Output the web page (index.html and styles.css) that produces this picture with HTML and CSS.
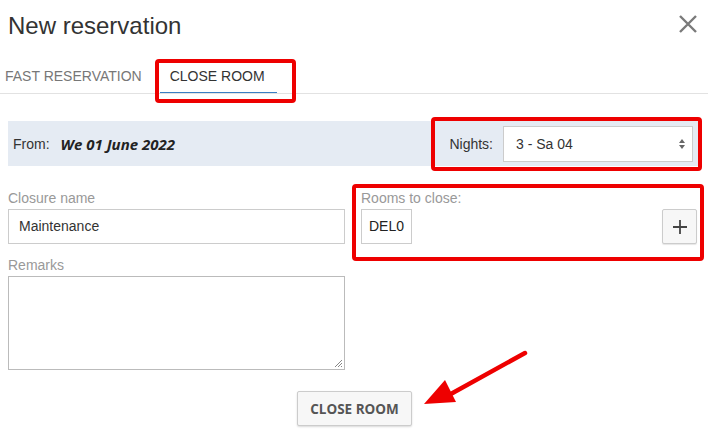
FILE: index.html
```html
<!DOCTYPE html>
<html lang="en">
<head>
    <meta charset="UTF-8">
    <title>New reservation</title>
    <link rel="stylesheet" href="styles.css">
</head>
<body>
    <div class="modal">
        <div class="modal-header">
            <h1>New reservation</h1>
            <button class="close-x" aria-label="Close">
                <svg width="20" height="20" viewBox="0 0 20 20"><path d="M2 2L18 18M18 2L2 18" stroke="#7a7a7a" stroke-width="2.4" fill="none"/></svg>
            </button>
        </div>

        <div class="tabs">
            <span class="tab">FAST RESERVATION</span>
            <span class="tab active">CLOSE ROOM</span>
        </div>

        <div class="from-bar">
            <span class="from-label">From:</span>
            <span class="from-date">We 01 June 2022</span>
            <span class="nights-label">Nights:</span>
            <div class="select">
                <span>3 - Sa 04</span>
                <svg width="8" height="12" viewBox="0 0 8 12"><path d="M4 1L7 5H1Z M4 11L7 7H1Z" fill="#666"/></svg>
            </div>
        </div>

        <div class="form-grid">
            <div class="col">
                <label>Closure name</label>
                <div class="input">Maintenance</div>
                <label class="remarks-label">Remarks</label>
                <div class="textarea">
                    <svg class="grip" width="9" height="9" viewBox="0 0 9 9"><path d="M8 1L1 8M8 4L4 8M8 7L7 8" stroke="#888" stroke-width="1"/></svg>
                </div>
            </div>
            <div class="col">
                <label>Rooms to close:</label>
                <div class="rooms-row">
                    <span class="room-chip">DEL0</span>
                    <button class="add-btn">
                        <svg width="16" height="16" viewBox="0 0 16 16"><path d="M8 1V15M1 8H15" stroke="#444" stroke-width="1.8"/></svg>
                    </button>
                </div>
            </div>
        </div>

        <div class="actions">
            <button class="submit-btn">CLOSE ROOM</button>
        </div>

        <!-- annotation marks -->
        <div class="mark mark-tab"></div>
        <div class="mark mark-nights"></div>
        <div class="mark mark-rooms"></div>
        <svg class="arrow" width="120" height="70" viewBox="0 0 120 70">
            <path d="M104 5L28 47" stroke="#ee0000" stroke-width="4.5" stroke-linecap="round"/>
            <path d="M3 56L24 32L35 54Z" fill="#ee0000"/>
        </svg>
    </div>
</body>
</html>
```

FILE: styles.css
```css
body {
    margin: 0;
    background: #fff;
    font-family: "Liberation Sans", Arial, sans-serif;
    color: #333;
}

.modal {
    position: relative;
    width: 708px;
    height: 442px;
    overflow: hidden;
}

.modal-header {
    display: flex;
    justify-content: space-between;
    align-items: flex-start;
    padding: 12px 10px 0 8px;
    height: 38px;
}

.modal-header h1 {
    margin: 0;
    font-size: 24px;
    font-weight: normal;
    line-height: 28px;
    color: #333;
}

.close-x {
    border: none;
    background: none;
    padding: 0;
    margin-top: 2px;
    width: 20px;
    height: 20px;
}

.tabs {
    display: flex;
    padding-left: 5px;
    padding-top: 18px;
    border-bottom: 1px solid #e2e2e2;
}

.tab {
    font-size: 14px;
    line-height: 16px;
    color: #777;
    padding-bottom: 9px;
}

.tab.active {
    color: #333;
    margin-left: 18px;
    padding: 0 12px 8px 10px;
    border-bottom: 1px solid #3a7fc4;
}

.from-bar {
    display: flex;
    align-items: center;
    margin: 27px 8px 0 8px;
    height: 45px;
    background: #e5ebf3;
    padding: 0 7px 0 5px;
    font-size: 14px;
}

.from-label {
    color: #333;
}

.from-date {
    margin-left: 11px;
    font-family: "Open Sans", sans-serif;
    font-weight: bold;
    font-style: italic;
    font-size: 15px;
    color: #222;
}

.nights-label {
    margin-left: auto;
    margin-right: 10px;
}

.select {
    display: flex;
    align-items: center;
    justify-content: space-between;
    box-sizing: border-box;
    width: 190px;
    height: 36px;
    background: #fff;
    border: 1px solid #ccc;
    padding: 0 6px 0 12px;
    font-size: 14px;
}

.form-grid {
    display: grid;
    grid-template-columns: 337px 336px;
    column-gap: 16px;
    padding-left: 8px;
    margin-top: 24px;
}

.col label {
    display: block;
    font-size: 14px;
    line-height: 16px;
    color: #999;
    margin-bottom: 3px;
}

.col .remarks-label {
    margin-top: 13px;
}

.input {
    box-sizing: border-box;
    height: 35px;
    border: 1px solid #ccc;
    padding: 0 10px;
    font-size: 14px;
    line-height: 33px;
    color: #333;
}

.textarea {
    position: relative;
    box-sizing: border-box;
    height: 94px;
    border: 1px solid #bbb;
}

.grip {
    position: absolute;
    right: 1px;
    bottom: 1px;
}

.rooms-row {
    display: flex;
    justify-content: space-between;
}

.room-chip {
    box-sizing: border-box;
    height: 35px;
    border: 1px solid #ccc;
    padding: 0 7px;
    font-size: 14px;
    line-height: 33px;
    color: #222;
}

.add-btn {
    display: flex;
    align-items: center;
    justify-content: center;
    width: 35px;
    height: 35px;
    padding: 0;
    background: #f7f7f7;
    border: 1px solid #ccc;
    border-radius: 2px;
    box-shadow: 0 1px 1px rgba(0, 0, 0, 0.1);
}

.actions {
    display: flex;
    justify-content: center;
    margin-top: 21px;
    padding-left: 1px;
}

.submit-btn {
    width: 115px;
    height: 35px;
    background: #f7f7f7;
    border: 1px solid #ccc;
    border-radius: 2px;
    box-shadow: 0 1px 2px rgba(0, 0, 0, 0.15);
    font-family: "Open Sans", sans-serif;
    font-weight: bold;
    font-size: 13.5px;
    color: #555;
}

.mark {
    position: absolute;
    border: 4px solid #ee0000;
    border-radius: 4px;
    box-sizing: border-box;
}

.mark-tab {
    left: 155px;
    top: 59px;
    width: 141px;
    height: 44px;
}

.mark-nights {
    left: 431px;
    top: 117px;
    width: 271px;
    height: 54px;
}

.mark-rooms {
    left: 352px;
    top: 184px;
    width: 352px;
    height: 77px;
}

.arrow {
    position: absolute;
    left: 421px;
    top: 348px;
}
```
